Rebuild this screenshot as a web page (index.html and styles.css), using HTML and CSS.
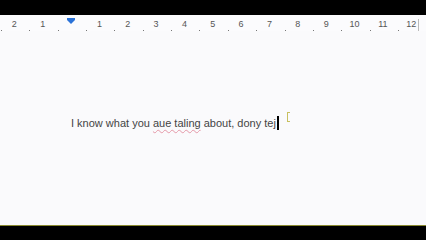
FILE: index.html
```html
<!DOCTYPE html>
<html lang="en">
<head>
    <meta charset="UTF-8">
    <meta name="viewport" content="width=device-width, initial-scale=1.0">
    <title>Document</title>
    <link rel="stylesheet" href="styles.css">
</head>
<body>
    <div class="frame">
        <div class="top-bar"></div>

        <div class="ruler">
            <div class="ruler-numbers">
                <span class="num">2</span>
                <span class="num">1</span>
                <span class="num"><span class="indent"></span></span>
                <span class="num">1</span>
                <span class="num">2</span>
                <span class="num">3</span>
                <span class="num">4</span>
                <span class="num">5</span>
                <span class="num">6</span>
                <span class="num">7</span>
                <span class="num">8</span>
                <span class="num">9</span>
                <span class="num">10</span>
                <span class="num">11</span>
                <span class="num">12</span>
            </div>
            <div class="ruler-ticks"></div>
            <div class="ruler-end"></div>
        </div>

        <div class="page">
            <p class="line">
                I know what you <span class="typo">aue taling</span> about, dony tej<span class="caret"></span>
            </p>
            <span class="ibeam"></span>
        </div>

        <div class="bottom-bar"></div>
    </div>
</body>
</html>
```

FILE: styles.css
```css
body {
    margin: 0;
    padding: 0;
    font-family: "Liberation Sans", Arial, sans-serif;
    background-color: #000;
}
.frame {
    width: 426px;
    height: 240px;
    display: flex;
    flex-direction: column;
    overflow: hidden;
}
.top-bar {
    height: 15px;
    background-color: #000;
}
.bottom-bar {
    height: 14px;
    background-color: #000;
    border-top: 1px solid #8a8a30;
}
.ruler {
    position: relative;
    height: 16px;
    background-color: #fbfbfd;
    display: flex;
    flex-direction: column;
}
.ruler-numbers {
    display: flex;
    height: 12px;
    padding-top: 4px;
    padding-left: 0.2px;
}
.num {
    flex: 0 0 28.35px;
    text-align: center;
    font-size: 9px;
    line-height: 11px;
    color: #555;
    display: flex;
    justify-content: center;
}
.indent {
    position: relative;
    width: 0;
    height: 0;
    margin-top: 1px;
    border-left: 4px solid transparent;
    border-right: 4px solid transparent;
    border-top: 4px solid #2a72d8;
}
.indent::before {
    content: "";
    position: absolute;
    left: -4px;
    top: -6px;
    width: 8px;
    height: 2px;
    background-color: #2a72d8;
}
.ruler-ticks {
    height: 4px;
    width: 418px;
    background-image:
        repeating-linear-gradient(to right, #777 0, #777 1px, transparent 1px, transparent 28.35px),
        repeating-linear-gradient(to right, #999 0, #999 1px, transparent 1px, transparent 14.175px),
        repeating-linear-gradient(to right, #aaa 0, #aaa 1px, transparent 1px, transparent 7.0875px);
    background-size: 100% 4px, 100% 3px, 100% 2px;
    background-position: 0.5px 0, 0.5px 1px, 0.5px 2px;
    background-repeat: no-repeat;
}
.ruler-end {
    position: absolute;
    left: 418px;
    top: 4px;
    width: 1px;
    height: 12px;
    background-color: #bbb;
}
.page {
    position: relative;
    flex: 1;
    background-color: #fafafc;
}
.line {
    margin: 0;
    padding: 85px 0 0 71px;
    font-size: 11px;
    line-height: 14px;
    color: #444;
    white-space: nowrap;
}
.typo {
    text-decoration: underline wavy #e498a8;
    text-decoration-thickness: 1px;
    text-underline-offset: 2px;
}
.caret {
    display: inline-block;
    width: 2px;
    height: 14px;
    margin-left: 1px;
    background-color: #000;
    vertical-align: -3px;
}
.ibeam {
    position: absolute;
    left: 287px;
    top: 81px;
    width: 2px;
    height: 8px;
    border: 1px solid #c8c060;
    border-right: none;
}
```
